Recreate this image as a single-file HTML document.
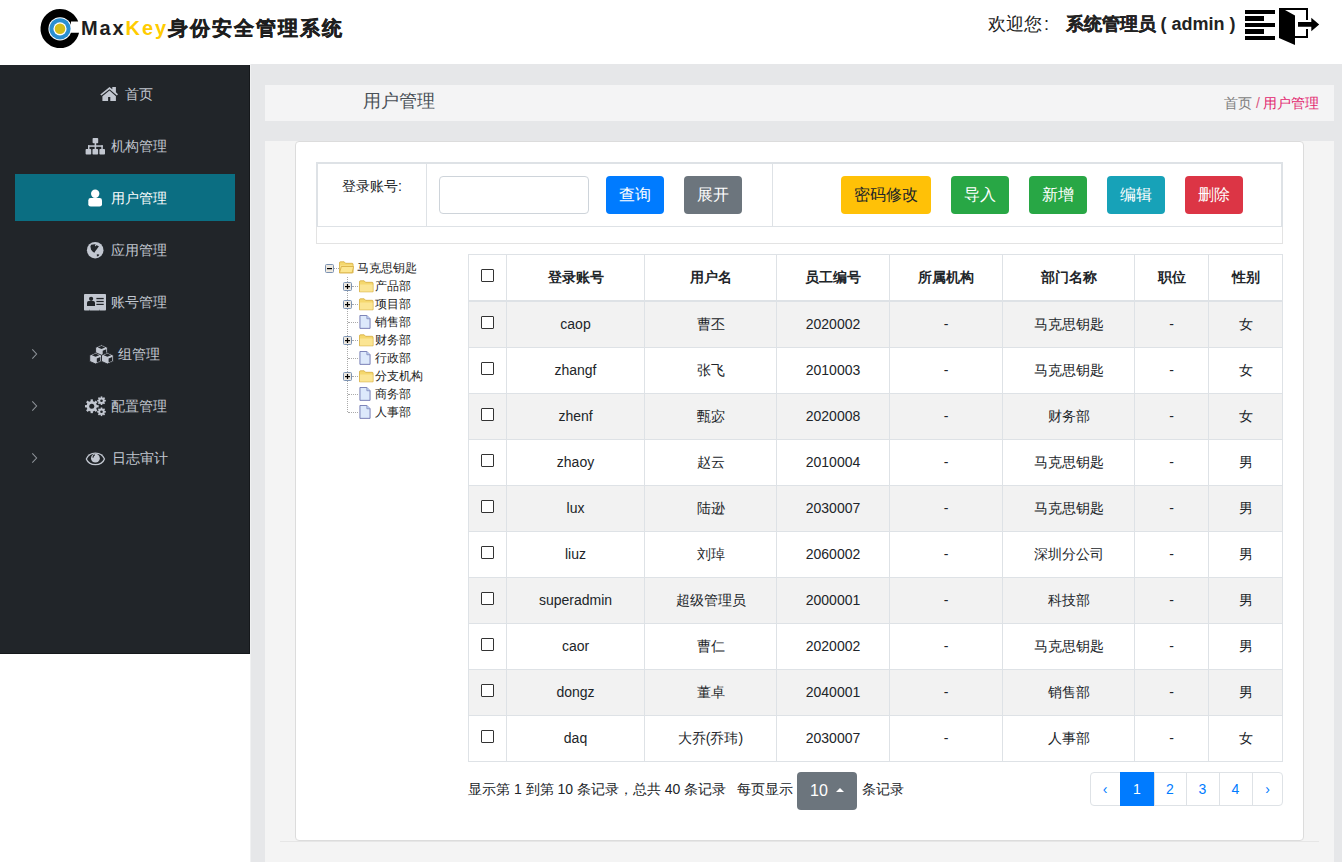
<!DOCTYPE html><html><head><meta charset="utf-8"><title>MaxKey</title><style>
*{box-sizing:border-box;margin:0;padding:0}
html,body{width:1342px;height:862px;overflow:hidden;background:#fff;
 font-family:"Liberation Sans",sans-serif;color:#212529;font-size:14px}
.a{position:absolute}
.t{position:absolute;white-space:nowrap;line-height:1}
#side{left:0;top:65px;width:250px;height:589px;background:#212529;border-right:1px solid #15181b;border-bottom:1px solid #15181b}
#main{left:250px;top:64px;width:1092px;height:798px;background:#e6e7e9;border-left:1px solid #f0f1f2}
#bc{left:265px;top:85px;width:1069px;height:36px;background:#f4f4f5}
#cont{left:265px;top:141px;width:1069px;height:721px;background:#f4f4f4}
#card{left:295px;top:141px;width:1009px;height:700px;background:#fff;border:1px solid #dcdcdc;border-radius:4px}
#hr{left:280px;top:841px;width:1039px;height:1px;background:#e6e6e6}
.mi{position:absolute;left:0;width:250px;height:20px;color:#c2c7d0;font-size:14px}
.mi svg{position:absolute;fill:#c2c7d0}
.btn{position:absolute;top:176px;height:38px;border-radius:4px;color:#fff;font-size:16px;line-height:37px;text-align:center}
.cell{position:absolute;text-align:center;white-space:nowrap;line-height:21px}
.vl{position:absolute;width:1px;background:#dee2e6}
.hl{position:absolute;height:1px;background:#dee2e6}
.cb{position:absolute;width:13px;height:13px;border:1px solid #333;background:#fff;border-radius:1px}
.tr{position:absolute;font-size:12px;line-height:12px;white-space:nowrap;color:#222}
</style></head><body>
<svg class="a" style="left:38px;top:6px" width="46" height="46" viewBox="0 0 46 46">
<path d="M22 3.1000000000000014 A19.5 19.5 0 1 0 41.04 26.8 L33 26.8 L33 15.6 L40.20 15.6 A19.5 19.5 0 0 0 22 3.1000000000000014 Z" fill="#000"/>
<circle cx="22" cy="22.8" r="11.6" fill="#fff"/>
<circle cx="22" cy="22.8" r="10.6" fill="#2a8fd2"/>
<circle cx="22" cy="22.8" r="6.6" fill="#fff"/>
<circle cx="22" cy="22.8" r="5.3" fill="#d4bd1c"/>
</svg>
<div class="t" style="left:81px;top:18px;font-size:20px;font-weight:bold;letter-spacing:1.9px;color:#1e1e1e">Max<span style="color:#ffcc00">Key</span><span style="letter-spacing:2px;-webkit-text-stroke:.4px #1e1e1e">身份安全管理系统</span></div>
<div class="t" style="left:988px;top:14.5px;font-size:18px;color:#222">欢迎您<span style="margin-left:2px">:</span></div>
<div class="t" style="left:1065.5px;top:15px;font-size:18px;font-weight:bold;color:#222"><span style="-webkit-text-stroke:.3px #222">系统管理员</span> ( admin )</div>
<svg class="a" style="left:1240px;top:0" width="90" height="50" viewBox="0 0 90 50"><rect x="5" y="10" width="30" height="4" fill="#000"/><rect x="5" y="16" width="19" height="5" fill="#000"/><rect x="5" y="23" width="30" height="4" fill="#000"/><rect x="5" y="29" width="19" height="5" fill="#000"/><rect x="5" y="36" width="30" height="4" fill="#000"/><path d="M39 8 H68 V20 H66 V10 H45 L55 15.4 V36 H66 V29 H68 V38 H55 V45 L39 38 Z" fill="#000"/><path d="M58 22 H71.3 V17.8 L79.2 24.5 L71.3 31.2 V26.8 H58 Z" fill="#000"/></svg>
<div id="main" class="a"></div><div id="bc" class="a"></div><div id="cont" class="a"></div><div id="hr" class="a"></div><div id="card" class="a"></div>
<div id="side" class="a"></div>
<div class="t" style="left:363px;top:92px;font-size:18px;color:#495057">用户管理</div>
<div class="t" style="left:1224px;top:95.5px;font-size:14px;color:#7d7d7d">首页 <span style="color:#d9547f">/</span> <span style="color:#e2266e;margin-left:-0.5px">用户管理</span></div>
<div class="a" style="left:15px;top:174px;width:220px;height:47px;background:#0b6e82"></div>
<div class="t" style="left:125px;top:87px;font-size:14px;color:#c2c7d0">首页</div>
<svg class="a" style="left:100px;top:86px" width="18" height="15" viewBox="0 0 18 15" fill="#c2c7d0"><path d="M0.3 8.6 L9.5 1 L12.3 3.3 V1 H15.9 V6.3 L18 8.3 L16.9 9.5 L9.5 3.3 L1.4 9.5 Z"/><path d="M2.4 10.2 L9.5 4.6 L15.9 10.2 V15 H10.3 V11 H8.1 V15 H2.4 Z"/></svg>
<div class="t" style="left:111px;top:139px;font-size:14px;color:#c2c7d0">机构管理</div>
<svg class="a" style="left:85px;top:137px" width="21" height="18" viewBox="0 0 21 18" fill="#c2c7d0"><rect x="7.6" y="1" width="5.6" height="5.2" rx=".8"/><rect x="9.6" y="5.5" width="1.6" height="6.8"/><rect x="3" y="8.3" width="14.8" height="1.5"/><rect x="3" y="8.3" width="1.5" height="4"/><rect x="16.3" y="8.3" width="1.5" height="4"/><rect x="0.6" y="12" width="5.6" height="5.6" rx=".8"/><rect x="7.5" y="12" width="5.6" height="5.6" rx=".8"/><rect x="14.4" y="12" width="5.6" height="5.6" rx=".8"/></svg>
<div class="t" style="left:111px;top:191px;font-size:14px;color:#fff">用户管理</div>
<svg class="a" style="left:88px;top:189px" width="15" height="18" viewBox="0 0 15 18" fill="#fff"><circle cx="7.2" cy="4.8" r="4.2"/><rect x="0.3" y="9" width="13.7" height="8.6" rx="2.4"/></svg>
<div class="t" style="left:111px;top:243px;font-size:14px;color:#c2c7d0">应用管理</div>
<svg class="a" style="left:86px;top:241px" width="18" height="18" viewBox="0 0 18 18" fill="#c2c7d0"><circle cx="9.2" cy="9.2" r="8.3"/><path d="M4.4 5.4 L5.1 3.7 L8.8 3.3 L10.5 4.3 L12.9 5.2 L11 8.1 L9.4 10.1 L8.4 11.8 L6.8 10.8 L5.1 8.7 Z M10.8 13.2 L13.3 13.6 L12.6 15.1 L10.9 15.4 Z" fill="#212529"/><circle cx="9.6" cy="4.6" r=".7"/></svg>
<div class="t" style="left:111px;top:295px;font-size:14px;color:#c2c7d0">账号管理</div>
<svg class="a" style="left:84px;top:294px" width="22" height="17" viewBox="0 0 22 17" fill="#c2c7d0"><rect x="0" y="0" width="22" height="16.6" rx=".8"/><circle cx="7.1" cy="4.8" r="2.1" fill="#212529"/><path d="M3 11.9 V8.8 Q3 7.1 4.7 7.1 H9.3 Q11 7.1 11 8.8 V11.9 Z" fill="#212529"/><rect x="12.4" y="3.9" width="7.3" height="1.3" fill="#212529"/><rect x="12.4" y="6.9" width="7.3" height="1.2" fill="#212529"/><rect x="12.4" y="9.8" width="7.3" height="1.2" fill="#212529"/><rect x="5.1" y="15.8" width=".6" height=".8" fill="#212529"/><rect x="15" y="15.8" width=".6" height=".8" fill="#212529"/></svg>
<div class="t" style="left:118px;top:347px;font-size:14px;color:#c2c7d0">组管理</div>
<svg class="a" style="left:89px;top:344px" width="25" height="21" viewBox="0 0 25 21" fill="#c2c7d0"><path d="M12.5 0.8 L18.4 3.4000000000000004 V9.600000000000001 L12.5 12.2 L6.6 9.600000000000001 V3.4000000000000004 Z" stroke="#212529" stroke-width=".9"/><path d="M8.80 3.40 L12.50 1.80 L16.20 3.40 L12.50 5.00 Z" fill="#212529"/><path d="M13.70 6.67 L17.20 5.13 V9.13 L13.70 10.67 Z" fill="#212529"/><path d="M6.6 8.6 L12.5 11.2 V17.4 L6.6 20.0 L0.6999999999999993 17.4 V11.2 Z" stroke="#212529" stroke-width=".9"/><path d="M2.90 11.20 L6.60 9.60 L10.30 11.20 L6.60 12.80 Z" fill="#212529"/><path d="M7.80 14.47 L11.30 12.93 V16.93 L7.80 18.47 Z" fill="#212529"/><path d="M18.4 8.6 L24.299999999999997 11.2 V17.4 L18.4 20.0 L12.499999999999998 17.4 V11.2 Z" stroke="#212529" stroke-width=".9"/><path d="M14.70 11.20 L18.40 9.60 L22.10 11.20 L18.40 12.80 Z" fill="#212529"/><path d="M19.60 14.47 L23.10 12.93 V16.93 L19.60 18.47 Z" fill="#212529"/></svg>
<div class="t" style="left:111px;top:399px;font-size:14px;color:#c2c7d0">配置管理</div>
<svg class="a" style="left:85px;top:396px" width="22" height="22" viewBox="0 0 22 22" fill="#c2c7d0"><g transform="translate(6.75,10.25)"><circle r="5.2"/><rect x="-1.15" y="-6.9" width="2.3" height="13.8" transform="rotate(0.0)"/><rect x="-1.15" y="-6.9" width="2.3" height="13.8" transform="rotate(45.0)"/><rect x="-1.15" y="-6.9" width="2.3" height="13.8" transform="rotate(90.0)"/><rect x="-1.15" y="-6.9" width="2.3" height="13.8" transform="rotate(135.0)"/><circle r="2.5" fill="#212529"/></g><g transform="translate(16.5,4.7)"><circle r="3.2"/><rect x="-0.8" y="-4.3" width="1.6" height="8.6" transform="rotate(0.0)"/><rect x="-0.8" y="-4.3" width="1.6" height="8.6" transform="rotate(45.0)"/><rect x="-0.8" y="-4.3" width="1.6" height="8.6" transform="rotate(90.0)"/><rect x="-0.8" y="-4.3" width="1.6" height="8.6" transform="rotate(135.0)"/><circle r="1.3" fill="#212529"/></g><g transform="translate(16.5,15.8)"><circle r="3.2"/><rect x="-0.8" y="-4.3" width="1.6" height="8.6" transform="rotate(0.0)"/><rect x="-0.8" y="-4.3" width="1.6" height="8.6" transform="rotate(45.0)"/><rect x="-0.8" y="-4.3" width="1.6" height="8.6" transform="rotate(90.0)"/><rect x="-0.8" y="-4.3" width="1.6" height="8.6" transform="rotate(135.0)"/><circle r="1.3" fill="#212529"/></g></svg>
<div class="t" style="left:112px;top:451px;font-size:14px;color:#c2c7d0">日志审计</div>
<svg class="a" style="left:85px;top:452px" width="21" height="14" viewBox="0 0 21 14" fill="#c2c7d0"><path d="M0.6 7 Q3 0.4 10.4 0.4 Q17.8 0.4 20.2 7 Q17.8 13.3 10.4 13.3 Q3 13.3 0.6 7 Z"/><path d="M2 7 Q4.4 1.8 10.4 1.8 Q16.4 1.8 18.8 7 Q16.4 12 10.4 12 Q4.4 12 2 7 Z" fill="#212529"/><circle cx="10.4" cy="6.2" r="4.4"/><path d="M7.9 5.6 Q8 3.6 9.8 2.7" stroke="#212529" stroke-width="1.1" fill="none"/></svg>
<svg class="a" style="left:31px;top:348px" width="8" height="12" viewBox="0 0 8 12"><path d="M1.3 1.3 L5.6 6 L1.3 10.6" stroke="#8f949a" stroke-width="1.05" fill="none"/></svg>
<svg class="a" style="left:31px;top:400px" width="8" height="12" viewBox="0 0 8 12"><path d="M1.3 1.3 L5.6 6 L1.3 10.6" stroke="#8f949a" stroke-width="1.05" fill="none"/></svg>
<svg class="a" style="left:31px;top:452px" width="8" height="12" viewBox="0 0 8 12"><path d="M1.3 1.3 L5.6 6 L1.3 10.6" stroke="#8f949a" stroke-width="1.05" fill="none"/></svg>
<div class="a" style="left:316px;top:162px;width:967px;height:65px;border:2px solid #dee2e6;border-bottom-width:1px"></div>
<div class="a" style="left:316px;top:227px;width:967px;height:17px;border:1px solid #e3e3e3;border-top:0"></div>
<div class="vl" style="left:426px;top:164px;height:62px"></div>
<div class="vl" style="left:772px;top:164px;height:62px"></div>
<div class="t" style="left:342px;top:179px;font-size:14px;color:#212529">登录账号:</div>
<div class="a" style="left:439px;top:176px;width:150px;height:38px;border:1px solid #ced4da;border-radius:4px;background:#fff"></div>
<div class="btn" style="left:606px;width:58px;background:#007bff;color:#fff">查询</div>
<div class="btn" style="left:684px;width:58px;background:#6c757d;color:#fff">展开</div>
<div class="btn" style="left:841px;width:90px;background:#ffc107;color:#212529">密码修改</div>
<div class="btn" style="left:951px;width:58px;background:#28a745;color:#fff">导入</div>
<div class="btn" style="left:1029px;width:58px;background:#28a745;color:#fff">新增</div>
<div class="btn" style="left:1107px;width:58px;background:#17a2b8;color:#fff">编辑</div>
<div class="btn" style="left:1185px;width:58px;background:#dc3545;color:#fff">删除</div>
<div class="a" style="left:334px;top:268px;width:5px;border-top:1px dotted #aaa"></div>
<svg class="a" style="left:325px;top:264px" width="9" height="9" viewBox="0 0 9 9"><rect x=".5" y=".5" width="8" height="8" rx="1" fill="#eee9e0" stroke="#7c93b3"/><rect x="2" y="4" width="5" height="1.2" fill="#000"/></svg>
<svg class="a" style="left:339px;top:261px" width="15" height="13" viewBox="0 0 16 13" preserveAspectRatio="none"><path d="M.5 2 Q.5 .8 1.5 .8 H5.5 L7 2.3 H14 Q15 2.3 15 3.3 V11.8 H.5 Z" fill="#f5d86e" stroke="#d4a93a" stroke-width=".8"/><path d="M1 4.5 H14.6 V11.5 H1 Z" fill="#fbe594"/><path d="M.5 11.8 L2.5 5.5 H15.6 L14 11.8 Z" fill="#fce690" stroke="#d4a93a" stroke-width=".8"/></svg>
<div class="tr" style="left:357px;top:262px">马克思钥匙</div>
<div class="a" style="left:347px;top:277px;height:135px;border-left:1px dotted #aaa"></div>
<div class="a" style="left:352px;top:286px;width:6px;border-top:1px dotted #aaa"></div>
<svg class="a" style="left:343px;top:282px" width="9" height="9" viewBox="0 0 9 9"><rect x=".5" y=".5" width="8" height="8" rx="1" fill="#eee9e0" stroke="#7c93b3"/><rect x="2" y="4" width="5" height="1.2" fill="#000"/><rect x="3.9" y="2" width="1.2" height="5" fill="#000"/></svg>
<svg class="a" style="left:359px;top:280px" width="15" height="13" viewBox="0 0 16 13" preserveAspectRatio="none"><path d="M.5 2 Q.5 .8 1.5 .8 H5.5 L7 2.3 H14 Q15 2.3 15 3.3 V11.8 H.5 Z" fill="#f5d86e" stroke="#d4a93a" stroke-width=".8"/><path d="M1 4.5 H14.6 V11.5 H1 Z" fill="#fbe594"/></svg>
<div class="tr" style="left:375px;top:280px">产品部</div>
<div class="a" style="left:352px;top:304px;width:6px;border-top:1px dotted #aaa"></div>
<svg class="a" style="left:343px;top:300px" width="9" height="9" viewBox="0 0 9 9"><rect x=".5" y=".5" width="8" height="8" rx="1" fill="#eee9e0" stroke="#7c93b3"/><rect x="2" y="4" width="5" height="1.2" fill="#000"/><rect x="3.9" y="2" width="1.2" height="5" fill="#000"/></svg>
<svg class="a" style="left:359px;top:298px" width="15" height="13" viewBox="0 0 16 13" preserveAspectRatio="none"><path d="M.5 2 Q.5 .8 1.5 .8 H5.5 L7 2.3 H14 Q15 2.3 15 3.3 V11.8 H.5 Z" fill="#f5d86e" stroke="#d4a93a" stroke-width=".8"/><path d="M1 4.5 H14.6 V11.5 H1 Z" fill="#fbe594"/></svg>
<div class="tr" style="left:375px;top:298px">项目部</div>
<div class="a" style="left:348px;top:322px;width:10px;border-top:1px dotted #aaa"></div>
<svg class="a" style="left:359px;top:315px" width="12" height="14" viewBox="0 0 13 15" preserveAspectRatio="none"><path d="M1 .5 H8.5 L12 4 V14.3 H1 Z" fill="#dde9fb" stroke="#6f76b0" stroke-width="1"/><path d="M8.5 .5 V4 H12" fill="#bcd2f4" stroke="#7e84b8" stroke-width=".8"/></svg>
<div class="tr" style="left:375px;top:316px">销售部</div>
<div class="a" style="left:352px;top:340px;width:6px;border-top:1px dotted #aaa"></div>
<svg class="a" style="left:343px;top:336px" width="9" height="9" viewBox="0 0 9 9"><rect x=".5" y=".5" width="8" height="8" rx="1" fill="#eee9e0" stroke="#7c93b3"/><rect x="2" y="4" width="5" height="1.2" fill="#000"/><rect x="3.9" y="2" width="1.2" height="5" fill="#000"/></svg>
<svg class="a" style="left:359px;top:334px" width="15" height="13" viewBox="0 0 16 13" preserveAspectRatio="none"><path d="M.5 2 Q.5 .8 1.5 .8 H5.5 L7 2.3 H14 Q15 2.3 15 3.3 V11.8 H.5 Z" fill="#f5d86e" stroke="#d4a93a" stroke-width=".8"/><path d="M1 4.5 H14.6 V11.5 H1 Z" fill="#fbe594"/></svg>
<div class="tr" style="left:375px;top:334px">财务部</div>
<div class="a" style="left:348px;top:358px;width:10px;border-top:1px dotted #aaa"></div>
<svg class="a" style="left:359px;top:351px" width="12" height="14" viewBox="0 0 13 15" preserveAspectRatio="none"><path d="M1 .5 H8.5 L12 4 V14.3 H1 Z" fill="#dde9fb" stroke="#6f76b0" stroke-width="1"/><path d="M8.5 .5 V4 H12" fill="#bcd2f4" stroke="#7e84b8" stroke-width=".8"/></svg>
<div class="tr" style="left:375px;top:352px">行政部</div>
<div class="a" style="left:352px;top:376px;width:6px;border-top:1px dotted #aaa"></div>
<svg class="a" style="left:343px;top:372px" width="9" height="9" viewBox="0 0 9 9"><rect x=".5" y=".5" width="8" height="8" rx="1" fill="#eee9e0" stroke="#7c93b3"/><rect x="2" y="4" width="5" height="1.2" fill="#000"/><rect x="3.9" y="2" width="1.2" height="5" fill="#000"/></svg>
<svg class="a" style="left:359px;top:370px" width="15" height="13" viewBox="0 0 16 13" preserveAspectRatio="none"><path d="M.5 2 Q.5 .8 1.5 .8 H5.5 L7 2.3 H14 Q15 2.3 15 3.3 V11.8 H.5 Z" fill="#f5d86e" stroke="#d4a93a" stroke-width=".8"/><path d="M1 4.5 H14.6 V11.5 H1 Z" fill="#fbe594"/></svg>
<div class="tr" style="left:375px;top:370px">分支机构</div>
<div class="a" style="left:348px;top:394px;width:10px;border-top:1px dotted #aaa"></div>
<svg class="a" style="left:359px;top:387px" width="12" height="14" viewBox="0 0 13 15" preserveAspectRatio="none"><path d="M1 .5 H8.5 L12 4 V14.3 H1 Z" fill="#dde9fb" stroke="#6f76b0" stroke-width="1"/><path d="M8.5 .5 V4 H12" fill="#bcd2f4" stroke="#7e84b8" stroke-width=".8"/></svg>
<div class="tr" style="left:375px;top:388px">商务部</div>
<div class="a" style="left:348px;top:412px;width:10px;border-top:1px dotted #aaa"></div>
<svg class="a" style="left:359px;top:405px" width="12" height="14" viewBox="0 0 13 15" preserveAspectRatio="none"><path d="M1 .5 H8.5 L12 4 V14.3 H1 Z" fill="#dde9fb" stroke="#6f76b0" stroke-width="1"/><path d="M8.5 .5 V4 H12" fill="#bcd2f4" stroke="#7e84b8" stroke-width=".8"/></svg>
<div class="tr" style="left:375px;top:406px">人事部</div>
<div class="a" style="left:468px;top:254px;width:815px;height:508px;background:#fff"></div>
<div class="a" style="left:469px;top:302px;width:813px;height:45px;background:#f2f2f2"></div>
<div class="a" style="left:469px;top:394px;width:813px;height:45px;background:#f2f2f2"></div>
<div class="a" style="left:469px;top:486px;width:813px;height:45px;background:#f2f2f2"></div>
<div class="a" style="left:469px;top:578px;width:813px;height:45px;background:#f2f2f2"></div>
<div class="a" style="left:469px;top:670px;width:813px;height:45px;background:#f2f2f2"></div>
<div class="hl" style="left:468px;top:254px;width:815px"></div>
<div class="a" style="left:468px;top:300px;width:815px;height:2px;background:#dee2e6"></div>
<div class="hl" style="left:468px;top:347px;width:815px"></div>
<div class="hl" style="left:468px;top:393px;width:815px"></div>
<div class="hl" style="left:468px;top:439px;width:815px"></div>
<div class="hl" style="left:468px;top:485px;width:815px"></div>
<div class="hl" style="left:468px;top:531px;width:815px"></div>
<div class="hl" style="left:468px;top:577px;width:815px"></div>
<div class="hl" style="left:468px;top:623px;width:815px"></div>
<div class="hl" style="left:468px;top:669px;width:815px"></div>
<div class="hl" style="left:468px;top:715px;width:815px"></div>
<div class="hl" style="left:468px;top:761px;width:815px"></div>
<div class="vl" style="left:468px;top:254px;height:508px"></div>
<div class="vl" style="left:506px;top:254px;height:508px"></div>
<div class="vl" style="left:644px;top:254px;height:508px"></div>
<div class="vl" style="left:776px;top:254px;height:508px"></div>
<div class="vl" style="left:889px;top:254px;height:508px"></div>
<div class="vl" style="left:1002px;top:254px;height:508px"></div>
<div class="vl" style="left:1134px;top:254px;height:508px"></div>
<div class="vl" style="left:1208px;top:254px;height:508px"></div>
<div class="vl" style="left:1282px;top:254px;height:508px"></div>
<div class="cell" style="left:507px;width:137px;top:267px;font-weight:bold">登录账号</div>
<div class="cell" style="left:645px;width:131px;top:267px;font-weight:bold">用户名</div>
<div class="cell" style="left:777px;width:112px;top:267px;font-weight:bold">员工编号</div>
<div class="cell" style="left:890px;width:112px;top:267px;font-weight:bold">所属机构</div>
<div class="cell" style="left:1003px;width:131px;top:267px;font-weight:bold">部门名称</div>
<div class="cell" style="left:1135px;width:73px;top:267px;font-weight:bold">职位</div>
<div class="cell" style="left:1209px;width:73px;top:267px;font-weight:bold">性别</div>
<div class="cb" style="left:481px;top:269px"></div>
<div class="cb" style="left:481px;top:316px"></div>
<div class="cell" style="left:507px;width:137px;top:314px">caop</div>
<div class="cell" style="left:645px;width:131px;top:314px">曹丕</div>
<div class="cell" style="left:777px;width:112px;top:314px">2020002</div>
<div class="cell" style="left:890px;width:112px;top:314px">-</div>
<div class="cell" style="left:1003px;width:131px;top:314px">马克思钥匙</div>
<div class="cell" style="left:1135px;width:73px;top:314px">-</div>
<div class="cell" style="left:1209px;width:73px;top:314px">女</div>
<div class="cb" style="left:481px;top:362px"></div>
<div class="cell" style="left:507px;width:137px;top:360px">zhangf</div>
<div class="cell" style="left:645px;width:131px;top:360px">张飞</div>
<div class="cell" style="left:777px;width:112px;top:360px">2010003</div>
<div class="cell" style="left:890px;width:112px;top:360px">-</div>
<div class="cell" style="left:1003px;width:131px;top:360px">马克思钥匙</div>
<div class="cell" style="left:1135px;width:73px;top:360px">-</div>
<div class="cell" style="left:1209px;width:73px;top:360px">女</div>
<div class="cb" style="left:481px;top:408px"></div>
<div class="cell" style="left:507px;width:137px;top:406px">zhenf</div>
<div class="cell" style="left:645px;width:131px;top:406px">甄宓</div>
<div class="cell" style="left:777px;width:112px;top:406px">2020008</div>
<div class="cell" style="left:890px;width:112px;top:406px">-</div>
<div class="cell" style="left:1003px;width:131px;top:406px">财务部</div>
<div class="cell" style="left:1135px;width:73px;top:406px">-</div>
<div class="cell" style="left:1209px;width:73px;top:406px">女</div>
<div class="cb" style="left:481px;top:454px"></div>
<div class="cell" style="left:507px;width:137px;top:452px">zhaoy</div>
<div class="cell" style="left:645px;width:131px;top:452px">赵云</div>
<div class="cell" style="left:777px;width:112px;top:452px">2010004</div>
<div class="cell" style="left:890px;width:112px;top:452px">-</div>
<div class="cell" style="left:1003px;width:131px;top:452px">马克思钥匙</div>
<div class="cell" style="left:1135px;width:73px;top:452px">-</div>
<div class="cell" style="left:1209px;width:73px;top:452px">男</div>
<div class="cb" style="left:481px;top:500px"></div>
<div class="cell" style="left:507px;width:137px;top:498px">lux</div>
<div class="cell" style="left:645px;width:131px;top:498px">陆逊</div>
<div class="cell" style="left:777px;width:112px;top:498px">2030007</div>
<div class="cell" style="left:890px;width:112px;top:498px">-</div>
<div class="cell" style="left:1003px;width:131px;top:498px">马克思钥匙</div>
<div class="cell" style="left:1135px;width:73px;top:498px">-</div>
<div class="cell" style="left:1209px;width:73px;top:498px">男</div>
<div class="cb" style="left:481px;top:546px"></div>
<div class="cell" style="left:507px;width:137px;top:544px">liuz</div>
<div class="cell" style="left:645px;width:131px;top:544px">刘琸</div>
<div class="cell" style="left:777px;width:112px;top:544px">2060002</div>
<div class="cell" style="left:890px;width:112px;top:544px">-</div>
<div class="cell" style="left:1003px;width:131px;top:544px">深圳分公司</div>
<div class="cell" style="left:1135px;width:73px;top:544px">-</div>
<div class="cell" style="left:1209px;width:73px;top:544px">男</div>
<div class="cb" style="left:481px;top:592px"></div>
<div class="cell" style="left:507px;width:137px;top:590px">superadmin</div>
<div class="cell" style="left:645px;width:131px;top:590px">超级管理员</div>
<div class="cell" style="left:777px;width:112px;top:590px">2000001</div>
<div class="cell" style="left:890px;width:112px;top:590px">-</div>
<div class="cell" style="left:1003px;width:131px;top:590px">科技部</div>
<div class="cell" style="left:1135px;width:73px;top:590px">-</div>
<div class="cell" style="left:1209px;width:73px;top:590px">男</div>
<div class="cb" style="left:481px;top:638px"></div>
<div class="cell" style="left:507px;width:137px;top:636px">caor</div>
<div class="cell" style="left:645px;width:131px;top:636px">曹仁</div>
<div class="cell" style="left:777px;width:112px;top:636px">2020002</div>
<div class="cell" style="left:890px;width:112px;top:636px">-</div>
<div class="cell" style="left:1003px;width:131px;top:636px">马克思钥匙</div>
<div class="cell" style="left:1135px;width:73px;top:636px">-</div>
<div class="cell" style="left:1209px;width:73px;top:636px">男</div>
<div class="cb" style="left:481px;top:684px"></div>
<div class="cell" style="left:507px;width:137px;top:682px">dongz</div>
<div class="cell" style="left:645px;width:131px;top:682px">董卓</div>
<div class="cell" style="left:777px;width:112px;top:682px">2040001</div>
<div class="cell" style="left:890px;width:112px;top:682px">-</div>
<div class="cell" style="left:1003px;width:131px;top:682px">销售部</div>
<div class="cell" style="left:1135px;width:73px;top:682px">-</div>
<div class="cell" style="left:1209px;width:73px;top:682px">男</div>
<div class="cb" style="left:481px;top:730px"></div>
<div class="cell" style="left:507px;width:137px;top:728px">daq</div>
<div class="cell" style="left:645px;width:131px;top:728px">大乔(乔玮)</div>
<div class="cell" style="left:777px;width:112px;top:728px">2030007</div>
<div class="cell" style="left:890px;width:112px;top:728px">-</div>
<div class="cell" style="left:1003px;width:131px;top:728px">人事部</div>
<div class="cell" style="left:1135px;width:73px;top:728px">-</div>
<div class="cell" style="left:1209px;width:73px;top:728px">女</div>
<div class="t" style="left:468px;top:782px;font-size:14px;color:#212529">显示第 1 到第 10 条记录，总共 40 条记录</div>
<div class="t" style="left:737px;top:782px;font-size:14px;color:#212529">每页显示</div>
<div class="a" style="left:797px;top:772px;width:60px;height:38px;background:#6c757d;border-radius:4px"></div>
<div class="t" style="left:810px;top:783px;font-size:16px;color:#fff">10</div>
<svg class="a" style="left:836px;top:788px" width="8" height="4" viewBox="0 0 8 4"><path d="M0 4 L4 0 L8 4Z" fill="#fff"/></svg>
<div class="t" style="left:862px;top:782px;font-size:14px;color:#212529">条记录</div>
<div class="a" style="left:1090px;top:772px;width:193px;height:34px;border:1px solid #dee2e6;border-radius:4px;background:#fff"></div>
<div class="a" style="left:1120px;top:772px;width:34px;height:34px;background:#007bff"></div>
<div class="cell" style="left:1090px;width:30px;top:779px;font-size:14px;line-height:20px;color:#007bff">‹</div>
<div class="cell" style="left:1120px;width:34px;top:779px;font-size:14px;line-height:20px;color:#fff">1</div>
<div class="vl" style="left:1154px;top:773px;height:32px"></div>
<div class="cell" style="left:1154px;width:32px;top:779px;font-size:14px;line-height:20px;color:#007bff">2</div>
<div class="vl" style="left:1186px;top:773px;height:32px"></div>
<div class="cell" style="left:1186px;width:33px;top:779px;font-size:14px;line-height:20px;color:#007bff">3</div>
<div class="vl" style="left:1219px;top:773px;height:32px"></div>
<div class="cell" style="left:1219px;width:33px;top:779px;font-size:14px;line-height:20px;color:#007bff">4</div>
<div class="vl" style="left:1252px;top:773px;height:32px"></div>
<div class="cell" style="left:1252px;width:31px;top:779px;font-size:14px;line-height:20px;color:#007bff">›</div>
</body></html>
